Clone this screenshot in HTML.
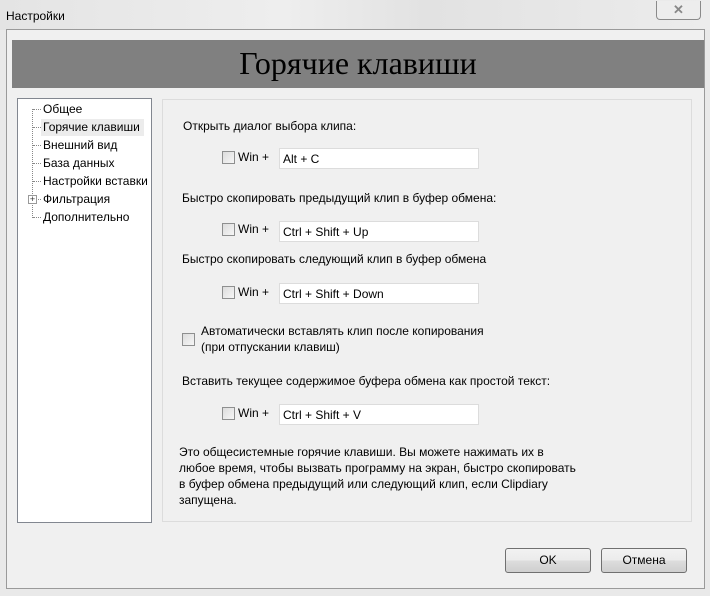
<!DOCTYPE html>
<html><head><meta charset="utf-8"><style>
*{margin:0;padding:0;box-sizing:border-box}
body{width:710px;height:596px;background:#e9e9e9;position:relative;overflow:hidden;font-family:"Liberation Sans",sans-serif;font-size:12px;color:#000;letter-spacing:0}
.a{position:absolute;white-space:nowrap;line-height:16px}
.cb{position:absolute;width:13px;height:13px;border:1px solid #8e8f8f;background:linear-gradient(135deg,#dcdcdc,#f6f6f6)}
.inp{position:absolute;left:279px;width:200px;height:21px;background:#fff;border:1px solid #dcdcdc;padding:3px 0 0 3px;line-height:14px}
.btn{position:absolute;top:548px;width:86px;height:25px;border:1px solid #707070;border-radius:3px;background:linear-gradient(#f2f2f2 0,#ebebeb 50%,#dddddd 51%,#cfcfcf 100%);text-align:center;line-height:23px}
.tr{position:absolute;left:43px;line-height:16px}
.dot{position:absolute;border-top:1px dotted #888;width:8px;left:33px}
</style></head><body>
<div style="position:absolute;left:0;top:0;width:710px;height:30px;background:linear-gradient(90deg,#e4e4e4,#eeeeee 40%,#e2e2e2 60%,#ececec)"></div>
<div class="a" style="left:6px;top:8px">Настройки</div>
<div style="position:absolute;left:656px;top:1px;width:45px;height:19px;border:1px solid #8a8a8a;border-top:none;border-radius:0 0 4px 4px;background:#ededed;text-align:center;font-size:13px;line-height:17px;color:#888;font-weight:bold">✕</div>
<div style="position:absolute;left:6px;top:29px;width:699px;height:560px;border:1px solid #9a9a9a;background:#f0f0f0"></div>
<div style="position:absolute;left:12px;top:40px;width:692px;height:48px;background:#808080;text-align:center;font-family:'Liberation Serif',serif;font-size:32px;line-height:46px;letter-spacing:0">Горячие клавиши</div>
<div style="position:absolute;left:17px;top:98px;width:135px;height:425px;background:#fff;border:1px solid #828790"></div>
<div style="position:absolute;left:32px;top:109px;height:109px;border-left:1px dotted #888"></div>
<div class="dot" style="top:109px"></div><div class="dot" style="top:127px"></div><div class="dot" style="top:145px"></div><div class="dot" style="top:163px"></div><div class="dot" style="top:181px"></div><div class="dot" style="top:199px"></div><div class="dot" style="top:217px"></div>
<div style="position:absolute;left:28px;top:195px;width:9px;height:9px;border:1px solid #999;background:#fff;font-size:9px;line-height:7px;text-align:center;color:#333">+</div>
<div style="position:absolute;left:41px;top:119px;width:103px;height:17px;background:#ececec"></div>
<div class="tr" style="top:101px">Общее</div>
<div class="tr" style="top:119px">Горячие клавиши</div>
<div class="tr" style="top:137px">Внешний вид</div>
<div class="tr" style="top:155px">База данных</div>
<div class="tr" style="top:173px">Настройки вставки</div>
<div class="tr" style="top:191px">Фильтрация</div>
<div class="tr" style="top:209px">Дополнительно</div>
<div style="position:absolute;left:162px;top:99px;width:530px;height:423px;border:1px solid #dcdcdc;background:#f0f0f0"></div>
<div class="a" style="left:183px;top:118px">Открыть диалог выбора клипа:</div>
<div class="cb" style="left:222px;top:151px"></div><div class="a" style="left:238px;top:149px">Win +</div>
<div class="inp" style="top:148px">Alt + C</div>
<div class="a" style="left:182px;top:190px">Быстро скопировать предыдущий клип в буфер обмена:</div>
<div class="cb" style="left:222px;top:223px"></div><div class="a" style="left:238px;top:221px">Win +</div>
<div class="inp" style="top:221px">Ctrl + Shift + Up</div>
<div class="a" style="left:182px;top:251px">Быстро скопировать следующий клип в буфер обмена</div>
<div class="cb" style="left:222px;top:286px"></div><div class="a" style="left:238px;top:284px">Win +</div>
<div class="inp" style="top:283px">Ctrl + Shift + Down</div>
<div class="cb" style="left:182px;top:333px"></div>
<div class="a" style="left:201px;top:323px">Автоматически вставлять клип после копирования<br>(при отпускании клавиш)</div>
<div class="a" style="left:182px;top:373px">Вставить текущее содержимое буфера обмена как простой текст:</div>
<div class="cb" style="left:222px;top:407px"></div><div class="a" style="left:238px;top:405px">Win +</div>
<div class="inp" style="top:404px">Ctrl + Shift + V</div>
<div class="a" style="left:179px;top:444px">Это общесистемные горячие клавиши. Вы можете нажимать их в<br>любое время, чтобы вызвать программу на экран, быстро скопировать<br>в буфер обмена предыдущий или следующий клип, если Clipdiary<br>запущена.</div>
<div class="btn" style="left:505px">OK</div>
<div class="btn" style="left:601px">Отмена</div>
</body></html>
